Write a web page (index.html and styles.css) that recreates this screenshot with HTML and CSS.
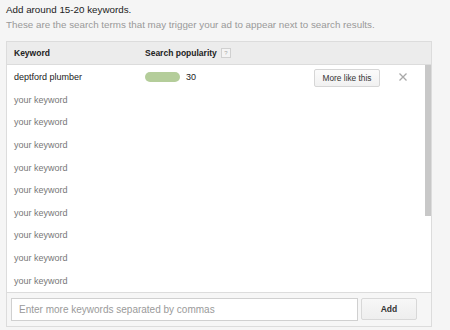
FILE: index.html
```html
<!DOCTYPE html>
<html>
<head>
<meta charset="utf-8">
<link rel="stylesheet" href="styles.css">
</head>
<body>
<div class="intro">
  <div class="title">Add around 15-20 keywords.</div>
  <div class="sub">These are the search terms that may trigger your ad to appear next to search results.</div>
</div>
<div class="box">
  <div class="head">
    <div class="col-kw">Keyword</div>
    <div class="col-pop">Search popularity <span class="help">?</span></div>
  </div>
  <div class="body">
    <div class="rows">
      <div class="row">
        <div class="col-kw kw">deptford plumber</div>
        <div class="col-pop"><span class="pill"></span><span class="num">30</span></div>
        <div class="more">More like this</div>
        <svg class="x" width="8" height="8" viewBox="0 0 8 8"><path d="M0.5 0.5L7.5 7.5M7.5 0.5L0.5 7.5" stroke="#a8a8a8" stroke-width="1.3" fill="none"/></svg>
      </div>
      <div class="row"><div class="col-kw ph">your keyword</div></div>
      <div class="row"><div class="col-kw ph">your keyword</div></div>
      <div class="row"><div class="col-kw ph">your keyword</div></div>
      <div class="row"><div class="col-kw ph">your keyword</div></div>
      <div class="row"><div class="col-kw ph">your keyword</div></div>
      <div class="row"><div class="col-kw ph">your keyword</div></div>
      <div class="row"><div class="col-kw ph">your keyword</div></div>
      <div class="row"><div class="col-kw ph">your keyword</div></div>
      <div class="row"><div class="col-kw ph">your keyword</div></div>
      <div class="row"><div class="col-kw ph">your keyword</div></div>
    </div>
    <div class="track"><div class="thumb"></div></div>
  </div>
  <div class="foot">
    <input class="entry" type="text" placeholder="Enter more keywords separated by commas">
    <button class="add">Add</button>
  </div>
</div>
</body>
</html>
```
FILE: styles.css
```css
html, body {
  margin: 0;
  padding: 0;
}
body {
  background: #f5f5f5;
  font-family: "Liberation Sans", Arial, sans-serif;
  color: #222;
  padding: 2px 0 0 6px;
  width: 450px;
  height: 330px;
  box-sizing: border-box;
  overflow: hidden;
}
.intro {
  line-height: 15px;
}
.title {
  font-size: 9.8px;
  color: #222;
}
.sub {
  font-size: 9.8px;
  color: #999;
}
.box {
  margin-top: 9px;
  width: 426px;
  box-sizing: border-box;
  border: 1px solid #dcdcdc;
  background: #fff;
}
.head {
  display: flex;
  align-items: center;
  height: 22px;
  background: #ececec;
  border-bottom: 1px solid #dcdcdc;
  font-size: 8.5px;
  font-weight: bold;
  color: #222;
}
.col-kw {
  width: 131px;
  padding-left: 7px;
  flex: none;
}
.col-pop {
  display: flex;
  align-items: center;
  flex: none;
}
.help {
  display: inline-block;
  width: 8px;
  height: 8px;
  border: 1px solid #d0d0d0;
  background: #f4f4f4;
  color: #aaa;
  font-size: 6px;
  font-weight: normal;
  line-height: 8px;
  text-align: center;
  margin-left: 4px;
}
.body {
  display: flex;
  height: 227px;
  overflow: hidden;
}
.rows {
  flex: 1;
  padding-top: 0.7px;
}
.row {
  display: flex;
  align-items: center;
  height: 22.65px;
  font-size: 9px;
}
.kw {
  color: #222;
}
.ph {
  color: #777;
}
.pill {
  display: inline-block;
  width: 35px;
  height: 10px;
  border-radius: 5px;
  background: #b4cd9a;
}
.num {
  margin-left: 6px;
  color: #222;
}
.more {
  margin-left: 118px;
  width: 64px;
  height: 16px;
  border: 1px solid #d6d6d6;
  border-radius: 2px;
  background: linear-gradient(#fbfbfb, #f1f1f1);
  font-size: 8.3px;
  line-height: 16px;
  text-align: center;
  color: #333;
  margin-top: 2px;
}
.x {
  margin-left: 19px;
}
.track {
  width: 6px;
  flex: none;
}
.thumb {
  height: 151px;
  background: #c8c8c8;
}
.foot {
  display: flex;
  align-items: flex-start;
  gap: 3px;
  border-top: 1px solid #dcdcdc;
  background: #f6f6f6;
  height: 34px;
  box-sizing: border-box;
  padding: 5px 0 0 4px;
}
.entry {
  width: 347px;
  height: 23px;
  box-sizing: border-box;
  border: 1px solid #d0d0d0;
  background: #fff;
  margin: 0;
  padding: 0 0 0 7px;
  font-family: "Liberation Sans", Arial, sans-serif;
  font-size: 10px;
  line-height: normal;
  color: #222;
  outline: none;
}
.entry::placeholder {
  color: #9a9a9a;
}
.add {
  width: 56px;
  height: 22px;
  box-sizing: border-box;
  border: 1px solid #d8d8d8;
  border-radius: 2px;
  background: linear-gradient(#f7f7f7, #eeeeee);
  margin: 0;
  padding: 0;
  font-family: "Liberation Sans", Arial, sans-serif;
  font-size: 8.5px;
  font-weight: bold;
  color: #333;
}
```
